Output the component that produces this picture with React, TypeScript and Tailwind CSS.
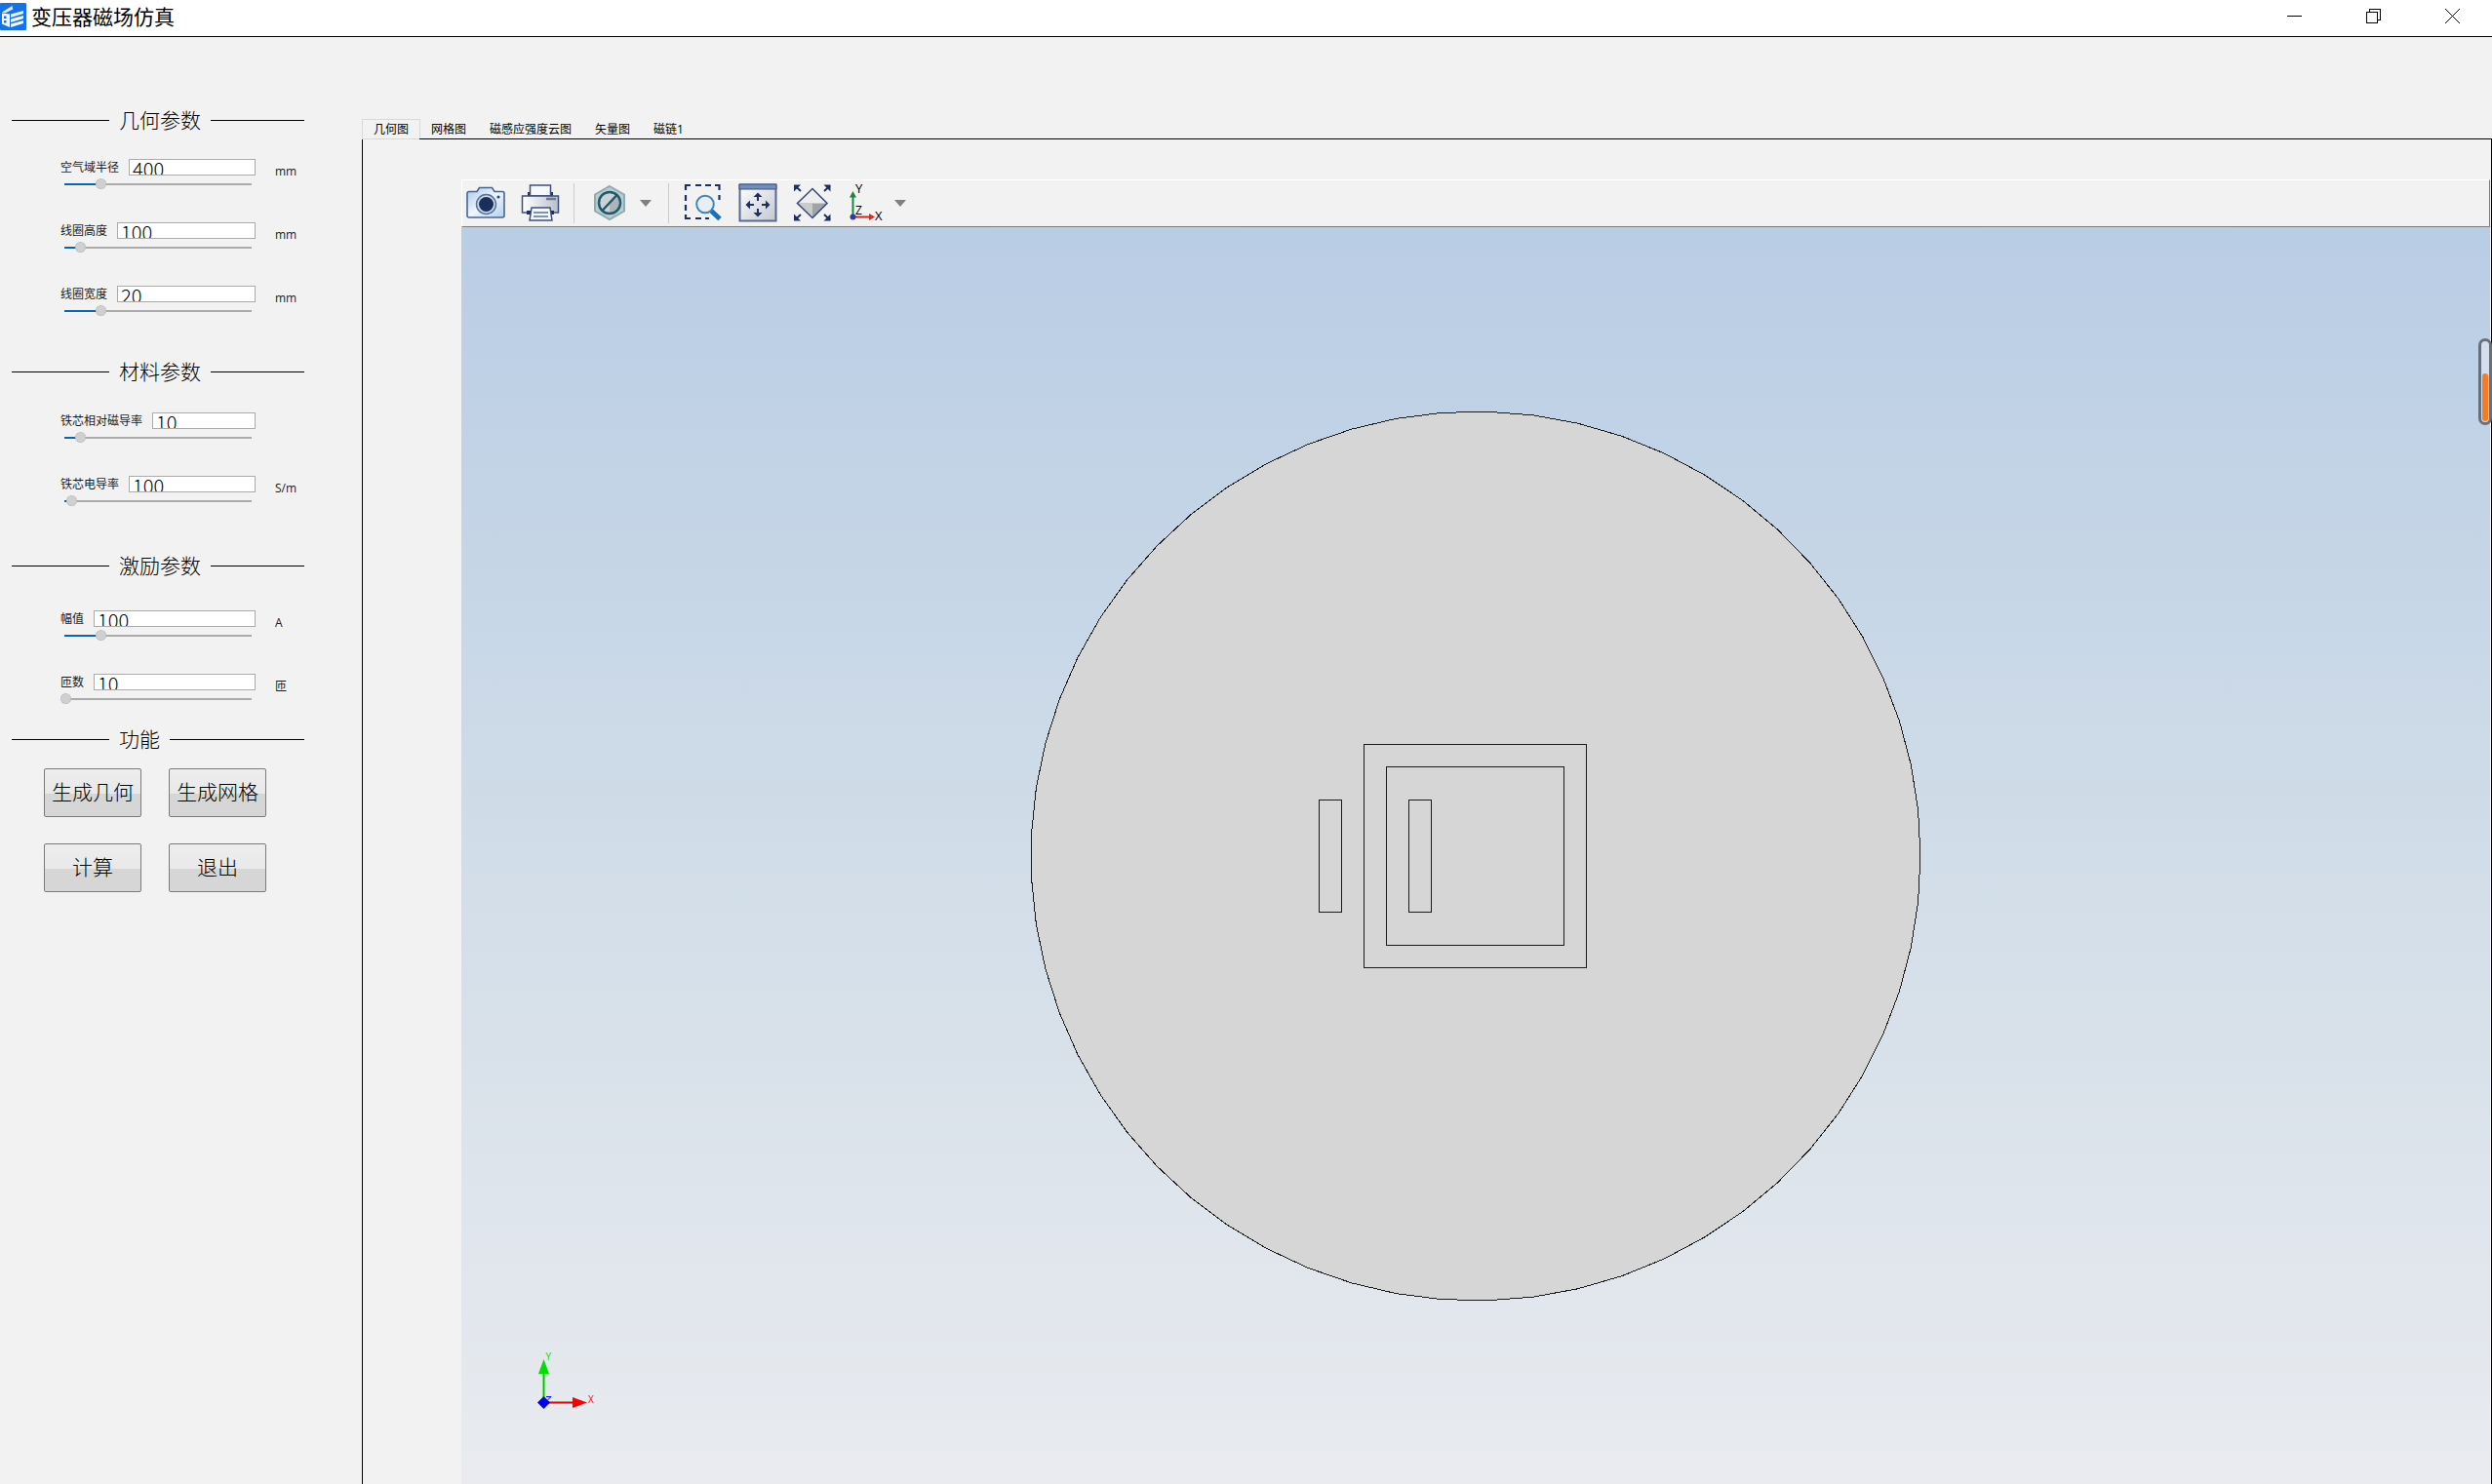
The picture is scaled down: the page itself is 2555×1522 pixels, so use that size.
import { useState } from "react";
import type { ReactNode } from "react";
import clsx from "clsx";

type Param = {
  id: string;
  label: string;
  value: string;
  unit: string;
  percent: number;
};

const geometryParams: Param[] = [
  { id: "air-radius", label: "空气域半径", value: "400", unit: "mm", percent: 19 },
  { id: "coil-height", label: "线圈高度", value: "100", unit: "mm", percent: 8 },
  { id: "coil-width", label: "线圈宽度", value: "20", unit: "mm", percent: 19 },
];

const materialParams: Param[] = [
  { id: "core-mu", label: "铁芯相对磁导率", value: "10", unit: "", percent: 8 },
  { id: "core-sigma", label: "铁芯电导率", value: "100", unit: "S/m", percent: 3 },
];

const excitationParams: Param[] = [
  { id: "amplitude", label: "幅值", value: "100", unit: "A", percent: 19 },
  { id: "turns", label: "匝数", value: "10", unit: "匝", percent: 0 },
];

const actions = ["生成几何", "生成网格", "计算", "退出"];

const tabs = ["几何图", "网格图", "磁感应强度云图", "矢量图", "磁链1"];

// The air domain is meshed as a regular polygon
const SIDES = 61;
const airDomain = Array.from({ length: SIDES }, (_, i) => {
  const a = (i * 2 * Math.PI) / SIDES;
  return `${(457 + 456 * Math.cos(a)).toFixed(1)},${(457 - 456 * Math.sin(a)).toFixed(1)}`;
}).join(" ");

function Logo() {
  return (
    <svg width="27" height="28" viewBox="0 0 27 28" aria-hidden="true">
      <rect width="27" height="28" rx="1" fill="#1473ea" />
      <path d="M2 9.500 12.500 3l.8 3.500L5 10.500Z" fill="#dce9fb" />
      <path d="M2 10.500 10 11.500V25L2 21.500Z" fill="#f4f8fe" />
      <path d="M4 13.500h2.500V16H4ZM4 18h2.500v2.500H4Z" fill="#1473ea" />
      <path d="M11 11.500 24 8v3L11 15Z" fill="#e6effc" />
      <path d="M11 16.500 24 13v3l-13 4Z" fill="#f4f8fe" />
      <path d="M11 21.500 24 18v3l-13 4Z" fill="#f4f8fe" />
    </svg>
  );
}

function TitleBar() {
  return (
    <header className="flex h-[38px] shrink-0 items-stretch border-b border-black bg-white">
      <div className="flex flex-1 items-start gap-[5px] pt-[3px]">
        <Logo />
        <h1 className="text-[21px] leading-[28px] text-black">变压器磁场仿真</h1>
      </div>

      <button aria-label="最小化" className="flex w-[81px] items-center justify-center pb-1">
        <svg width="15" height="15" stroke="#000" shapeRendering="crispEdges">
          <path d="M0 7.500h15" />
        </svg>
      </button>
      <button aria-label="还原" className="flex w-[81px] items-center justify-center pb-1">
        <svg width="15" height="15" fill="none" stroke="#000" shapeRendering="crispEdges">
          <path d="M.5 3.500h11v11H.5ZM3.500 3.500v-3h11v11h-3" />
        </svg>
      </button>
      <button aria-label="关闭" className="flex w-[81px] items-center justify-center pb-1">
        <svg width="15" height="15" stroke="#000">
          <path d="m0 0 15 15M15 0 0 15" />
        </svg>
      </button>
    </header>
  );
}

function ParamRow({ param }: { param: Param }) {
  const [value, setValue] = useState(param.value);
  const [percent, setPercent] = useState(param.percent);

  return (
    <div className="flex h-8 gap-5 pl-[62px] text-[12px] text-[#1a1a1a]">
      <div className="flex w-[200px] flex-col gap-[3px]">
        <div className="flex h-[17px] items-center gap-[10px]">
          <label htmlFor={param.id} className="whitespace-nowrap leading-[17px]">
            {param.label}
          </label>
          <input
            id={param.id}
            type="text"
            value={value}
            onChange={(e) => setValue(e.target.value)}
            className="h-[17px] min-w-0 flex-1 overflow-hidden border border-[#ababab] bg-white px-[3px] pt-px font-['Noto_Sans_CJK_SC',sans-serif] text-[20px] font-light leading-[19px] text-black outline-none"
          />
        </div>
        <input
          type="range"
          aria-label={param.label}
          min={0}
          max={100}
          value={percent}
          onChange={(e) => setPercent(Number(e.target.value))}
          style={{
            backgroundImage: `linear-gradient(to right, #0a64b8 ${percent}%, #ababab ${percent}%)`,
          }}
          className="h-[11px] w-full appearance-none bg-[length:192px_2px] bg-center bg-no-repeat outline-none [&::-webkit-slider-thumb]:size-[11px] [&::-webkit-slider-thumb]:appearance-none [&::-webkit-slider-thumb]:rounded-full [&::-webkit-slider-thumb]:border [&::-webkit-slider-thumb]:border-dotted [&::-webkit-slider-thumb]:border-[#b0b0b0] [&::-webkit-slider-thumb]:bg-[#d0d0d0]"
        />
      </div>
      <span className="pt-[5px] leading-[16px]">{param.unit}</span>
    </div>
  );
}

function Section({
  title,
  className,
  children,
}: {
  title: string;
  className?: string;
  children: ReactNode;
}) {
  return (
    <section className={clsx("flex flex-col", className)}>
      <div className="flex h-8 items-center gap-[10px] pl-3 pr-[59px]">
        <span className="h-px w-[100px] bg-black" />
        <h2 className="text-[21px] font-light leading-8 text-black">{title}</h2>
        <span className="h-px flex-1 bg-black" />
      </div>
      {children}
    </section>
  );
}

function Sidebar() {
  return (
    <aside className="w-[371px] shrink-0 pt-[69px]">
      <Section title="几何参数" className="gap-6">
        <div className="flex flex-col gap-[33px]">
          {geometryParams.map((p) => (
            <ParamRow key={p.id} param={p} />
          ))}
        </div>
      </Section>

      <Section title="材料参数" className="mt-10 gap-[26px]">
        <div className="flex flex-col gap-[33px]">
          {materialParams.map((p) => (
            <ParamRow key={p.id} param={p} />
          ))}
        </div>
      </Section>

      <Section title="激励参数" className="mt-11 gap-[30px]">
        <div className="flex flex-col gap-[33px]">
          {excitationParams.map((p) => (
            <ParamRow key={p.id} param={p} />
          ))}
        </div>
      </Section>

      <Section title="功能" className="mt-[19px] gap-[14px]">
        <div className="grid grid-cols-[100px_100px] gap-x-7 gap-y-[27px] pl-[45px]">
          {actions.map((name) => (
            <button
              key={name}
              className="h-[50px] whitespace-nowrap rounded-[2px] border border-[#7a7a7a] bg-[linear-gradient(#ededed,#e9e9e9_52%,#d6d6d6_52%,#d6d6d6)] text-[21px] font-light text-black"
            >
              {name}
            </button>
          ))}
        </div>
      </Section>
    </aside>
  );
}

function CameraIcon() {
  return (
    <svg width="40" height="40" viewBox="0 0 40 40">
      <defs>
        <linearGradient id="cam" x1="0" y1="0" x2="1" y2="1">
          <stop offset="0" stopColor="#a9c8ea" />
          <stop offset=".5" stopColor="#eef5fc" />
          <stop offset="1" stopColor="#b4d0ee" />
        </linearGradient>
      </defs>
      <path
        d="M3 8.500h8l2.500-4h13l2.500 4h8q2 0 2 2V33q0 2-2 2H3q-2 0-2-2V10.500q0-2 2-2Z"
        fill="url(#cam)"
        stroke="#4a6491"
        strokeWidth="1.600"
      />
      <circle cx="20.500" cy="21.500" r="10" fill="#c9d9ea" stroke="#5a7398" strokeWidth="1.500" />
      <circle cx="20.500" cy="21.500" r="7.500" fill="#1b2f5e" />
      <circle cx="33" cy="14" r="1.500" fill="#1b3f7a" />
    </svg>
  );
}

function PrinterIcon() {
  return (
    <svg width="40" height="40" viewBox="0 0 40 40" stroke="#3d4f7d" strokeWidth="1.500">
      <defs>
        <linearGradient id="prn" x1="0" x2="1">
          <stop offset="0" stopColor="#fff" />
          <stop offset="1" stopColor="#b9bfcb" />
        </linearGradient>
      </defs>
      <path d="M7 9h26v5H7Z" fill="#1f3263" stroke="none" />
      <path d="M9.500 2h21v11h-21Z" fill="#f6f8fb" />
      <path d="M1.500 13h37v17h-37Z" fill="url(#prn)" />
      <path d="M26 16h10" stroke="#6c7791" strokeWidth="2.500" />
      <path d="M6 28h4v4H6ZM30 28h4v4h-4Z" fill="#1f3263" stroke="none" />
      <path d="M11 25h19l2 13H9Z" fill="#f3f6fa" />
      <path d="M13 30h15M13 34h15" stroke="#7d95ad" strokeWidth="2" />
    </svg>
  );
}

function HexagonIcon() {
  return (
    <svg width="40" height="40" viewBox="0 0 40 40">
      <path
        d="M20 3 35 11.500v17L20 37 5 28.500v-17Z"
        fill="#b9cdd2"
        stroke="#8fabb2"
        strokeWidth="2"
      />
      <circle cx="20" cy="20" r="11" fill="#ccd3d7" />
      <path d="M20 20 29 13.500v13L20 31Z" fill="#adb5ba" />
      <circle cx="20" cy="20" r="11" fill="none" stroke="#1f5a6b" strokeWidth="2.500" />
      <path d="m12.500 28 15-16" stroke="#1f5a6b" strokeWidth="2.500" />
    </svg>
  );
}

function ZoomAreaIcon() {
  return (
    <svg width="40" height="40" viewBox="0 0 40 40" fill="none">
      <path
        d="M2 7V2h5M12 2h6M22 2h6M32 2h4.500v5M36.500 12v5M2 12v6M2 22v6M2 32v4h5M12 36h6M22 36h4"
        stroke="#1d315f"
        strokeWidth="2.200"
      />
      <path d="m28 28 9 8.500" stroke="#1a6fb5" strokeWidth="5" />
      <circle cx="22" cy="21.500" r="8.800" fill="#e9eef3" stroke="#3f86bd" strokeWidth="2" />
    </svg>
  );
}

function PanWindowIcon() {
  return (
    <svg width="40" height="40" viewBox="0 0 40 40">
      <defs>
        <linearGradient id="pan" x1="0" y1="0" x2="1" y2="1">
          <stop offset="0" stopColor="#fff" />
          <stop offset="1" stopColor="#c3c8d2" />
        </linearGradient>
      </defs>
      <path d="M1.500 1.500h37v37h-37Z" fill="url(#pan)" stroke="#566a93" strokeWidth="2" />
      <path d="M1 1h38v5H1Z" fill="#6f8fbd" stroke="#3c5079" strokeWidth="1" />
      <g fill="#1d315f">
        <path d="m20 9.500 4.500 4.500H21v4h-2v-4h-3.500ZM20 34.500l4.500-4.500H21v-4h-2v4h-3.500Z" />
        <path d="m7.500 22 4.500-4.500V21h4v2h-4v3.500ZM32.500 22 28 17.500V21h-4v2h4v3.500Z" />
      </g>
    </svg>
  );
}

function FitAllIcon() {
  return (
    <svg width="40" height="40" viewBox="0 0 40 40">
      <path d="M4.500 20.500 20 5.500l15 15Z" fill="#ededed" />
      <path d="M4.500 20.500h30.500L20 35.500Z" fill="#a2a3a6" />
      <path d="M4.500 20.500H20v15Z" fill="#c9cacc" />
      <path d="m20 5.500 15 15-15 15-15.500-15Z" fill="none" stroke="#3c4d7b" strokeWidth="1.600" />
      <g stroke="#1d315f" strokeWidth="2">
        <path d="m2 2.500 6 5.500M38 2.500 32 8M2 37.500 8 32M38 37.500 32 32" />
      </g>
      <path
        d="M1 1.500h7L1 8.500ZM38.500 1.500h-7l7 7ZM1 38.500h7l-7-7ZM38.500 38.500h-7l7-7Z"
        fill="#1d315f"
      />
    </svg>
  );
}

function AxesIcon() {
  return (
    <svg
      width="40"
      height="40"
      viewBox="0 0 40 40"
      className="overflow-visible font-['Open_Sans',sans-serif]"
    >
      <path d="M5.500 14v21" stroke="#128a3e" strokeWidth="2" />
      <path d="m5.500 8 3.500 6.500H2Z" fill="#128a3e" />
      <path d="M6 34.500h17" stroke="#ee1c1c" strokeWidth="2" />
      <path d="m28 34.500-6-3.500v7Z" fill="#ee1c1c" />
      <circle cx="5.500" cy="34.500" r="3" fill="#2a3c9c" />
      <text x="8" y="10" fontSize="13">Y</text>
      <text x="8" y="31.500" fontSize="12">Z</text>
      <text x="28" y="38" fontSize="13">X</text>
    </svg>
  );
}

function ToolButton({ label, children }: { label: string; children: ReactNode }) {
  return (
    <button aria-label={label} className="size-10 shrink-0">
      {children}
    </button>
  );
}

function DropArrow({ label }: { label: string }) {
  return (
    <button aria-label={label} className="flex h-10 w-3 shrink-0 items-center justify-center">
      <svg width="12" height="7">
        <path d="M0 0h12L6 7Z" fill="#808080" />
      </svg>
    </button>
  );
}

function Toolbar() {
  return (
    <div className="flex h-[49px] items-center border border-b-[#7a7a7a] border-l-white border-r-[#7a7a7a] border-t-white pb-px pl-1">
      <div className="flex gap-4">
        <ToolButton label="截图"><CameraIcon /></ToolButton>
        <ToolButton label="打印"><PrinterIcon /></ToolButton>
      </div>
      <span className="ml-[14px] h-[41px] w-px bg-[#cccccc]" />
      <div className="ml-4 flex gap-[11px]">
        <ToolButton label="选择模式"><HexagonIcon /></ToolButton>
        <DropArrow label="更多选择模式" />
      </div>
      <span className="ml-[17px] h-[41px] w-px bg-[#cccccc]" />
      <div className="ml-[15px] flex gap-4">
        <ToolButton label="框选缩放"><ZoomAreaIcon /></ToolButton>
        <ToolButton label="平移"><PanWindowIcon /></ToolButton>
        <ToolButton label="适应窗口"><FitAllIcon /></ToolButton>
        <ToolButton label="视图方向"><AxesIcon /></ToolButton>
      </div>
      <span className="w-2" />
      <DropArrow label="更多视图方向" />
    </div>
  );
}

function Viewport() {
  return (
    <div className="relative flex flex-1 items-center justify-center overflow-hidden bg-[linear-gradient(#b9cde5,#d1dde8_50%,#e9ebef)]">
      <svg width="914" height="914" viewBox="0 0 914 914" fill="none" stroke="#1a1a1a" shapeRendering="crispEdges">
        <polygon points={airDomain} fill="#d6d6d6" />
        {/* core */}
        <rect x="342.500" y="342.500" width="228" height="229" />
        <rect x="365.500" y="365.500" width="182" height="183" />
        {/* coils */}
        <rect x="296.500" y="399.500" width="23" height="115" />
        <rect x="388.500" y="399.500" width="23" height="115" />
      </svg>

      {/* orientation triad */}
      <svg
        width="70"
        height="70"
        viewBox="0 0 70 70"
        className="absolute bottom-[67px] left-[72px] font-['Open_Sans',sans-serif]"
      >
        <path d="M12.500 20v34" stroke="#6fe06f" strokeWidth="3" />
        <path d="M12.500 20v34" stroke="#00c000" />
        <path d="m12.500 9 5.500 15H7Z" fill="#00e000" />
        <path d="M13 53.500h30" stroke="#f06a6a" strokeWidth="3" />
        <path d="M13 53.500h30" stroke="#e00000" />
        <path d="m57 53.500-15-5.500v11Z" fill="#ff0000" />
        <path d="m12.500 47 6.500 6.500-6.500 6.500L6 53.500Z" fill="#0000ff" />
        <text x="14.500" y="10" fontSize="10" fill="#00e000">Y</text>
        <text x="58" y="54" fontSize="10" fill="#ff0000">X</text>
        <path d="M15 47.500h5l-4 4" stroke="#0000ff" fill="none" />
      </svg>
    </div>
  );
}

export default function App() {
  const [active, setActive] = useState(0);

  return (
    <div className="relative flex h-screen flex-col overflow-hidden bg-[#f2f2f2] font-['Open_Sans','Noto_Sans_CJK_SC',sans-serif]">
      <TitleBar />

      <div className="flex min-h-0 flex-1">
        <Sidebar />

        <main className="flex min-w-0 flex-1 flex-col pt-[84px]">
          <div role="tablist" className="flex h-[21px] text-[12px] leading-[18px] text-black">
            {tabs.map((tab, i) => (
              <button
                key={tab}
                role="tab"
                aria-selected={i === active}
                onClick={() => setActive(i)}
                className={clsx(
                  "whitespace-nowrap",
                  i === active
                    ? "-mr-px border border-[#d9d9d9] px-[11px] pt-px"
                    : "border-b border-black px-3 pt-[2px]"
                )}
              >
                {tab}
              </button>
            ))}
            <span className="flex-1 border-b border-black" />
          </div>

          <div className="flex min-h-0 flex-1 flex-col border-x border-black pl-[101px] pr-px pt-[41px]">
            <Toolbar />
            <Viewport />
          </div>
        </main>
      </div>

      {/* floating gauge docked to the right edge */}
      <div className="absolute right-0 top-[347px] flex h-[89px] w-[14px] items-end justify-center rounded-[7px] border-[3px] border-[#6a7078] bg-[#d3dfee] pb-px">
        <span className="h-[49px] w-[6px] rounded-full bg-[#fa7a22]" />
      </div>
    </div>
  );
}
